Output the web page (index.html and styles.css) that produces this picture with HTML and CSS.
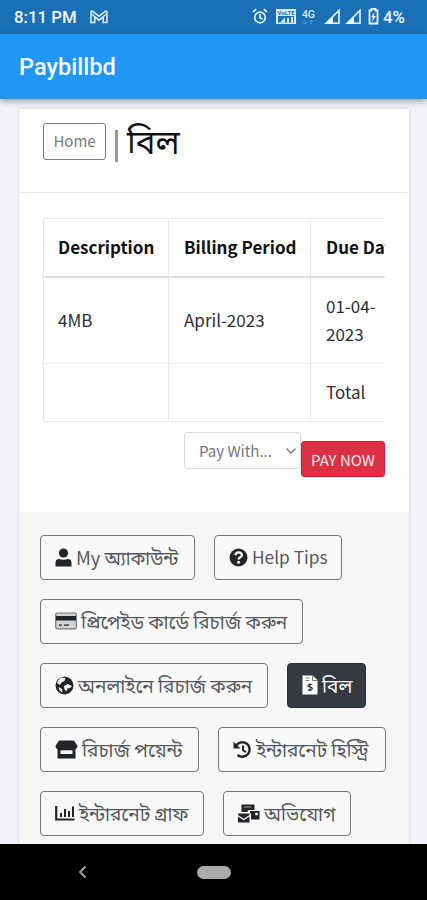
FILE: index.html
```html
<!DOCTYPE html>
<html lang="bn">
<head>
<meta charset="utf-8">
<title>Paybillbd</title>
<link rel="stylesheet" href="styles.css">
</head>
<body>
<div class="phone">
  <div class="status">
    <span class="clock">8:11 PM</span>
    <svg class="mail" width="18" height="14" viewBox="0 0 18 14"><path d="M1 12.5V2.5Q1 .8 2.6 1.2L9 6.4l6.4-5.2Q17 .8 17 2.5v10h-3.8V6.8L9 10.2 4.8 6.8v5.7zM4.8 6.8 1 3.5M13.2 6.8 17 3.5" fill="none" stroke="#e4eff8" stroke-width="1.5"/></svg>
    <svg class="tray" width="127" height="20" viewBox="0 0 127 20">
      <g fill="none" stroke="#eaf3fa" stroke-width="1.7"><circle cx="8" cy="10.5" r="5.3"/><path d="M8 7v3.8l2.5 1.5M1 5l3.2-2.8M15 5l-3.2-2.8"/></g>
      <path d="M24 2h20v15H24z" fill="#dceaf6"/><path d="M26 9h16v6.5H26z" fill="#1b70b5"/><path d="M28 15.500l5-5v5zM35 11h2v4.500h-2zM39 10h2v5.500h-2z" fill="#dceaf6"/>
      <text x="25.500" y="7.500" class="volte" textLength="17">VoLTE</text>
      <text x="50" y="10.500" class="net" textLength="13">4G</text>
      <path d="M53 13v4m-2-2 2 2 2-2M59 17v-4m-2 2 2-2 2 2" stroke="#5198d0" fill="none"/>
      <g fill="none" stroke="#e8f3fb" stroke-width="1.600"><path d="M74 16.200 87 3.500v12.700zM95 16.200 108 3.500v12.700z"/></g>
      <path d="M74 17l7-7v7zM95 17l7-7v7z" fill="#e8f3fb"/>
      <path d="M117.500 3.500h2V2h4v1.500h2v13h-8z" fill="none" stroke="#e8f3fb" stroke-width="1.800"/><path d="M122.500 5l-3.500 5.500h2L120 15l4-6h-2z" fill="#e8f3fb"/>
    </svg>
    <span class="percent">4%</span>
  </div>
  <header class="appbar">Paybillbd</header>
  <main class="content">
    <section class="card">
      <div class="card-head"><a class="home">Home</a><i class="bar"></i><h1>বিল</h1></div>
      <div class="card-body">
        <div class="table-clip">
          <table>
            <colgroup><col class="c1"><col class="c2"><col class="c3"></colgroup>
            <tr class="r-head"><th>Description</th><th>Billing Period</th><th>Due Date</th></tr>
            <tr class="r-item"><td>4MB</td><td>April-2023</td><td>01-04-<br>2023</td></tr>
            <tr class="r-total"><td></td><td></td><td>Total</td></tr>
          </table>
        </div>
        <div class="pay">
          <div class="select"><span>Pay With...</span><svg width="12" height="8" viewBox="0 0 12 8"><path d="M1.500 1.500 6 6l4.500-4.500" fill="none" stroke="#777b80" stroke-width="1.300"/></svg></div>
          <div class="paynow">PAY NOW</div>
        </div>
      </div>
      <nav class="links">
        <div class="row">
          <a class="btn w155"><svg width="17" height="19" viewBox="0 0 17 19"><circle cx="8.500" cy="5" r="4.600"/><path d="M.5 18.500v-3.500Q.5 11 4 11q4.500 1.500 9 0 3.500 0 3.500 4v3.500z"/></svg><span class="mixed">My অ্যাকাউন্ট</span></a>
          <a class="btn w128"><svg width="19" height="19" viewBox="0 0 19 19"><circle cx="9.500" cy="9.500" r="9"/><path d="M6.300 7.300q.5-3 3.400-3 3.200 0 3.200 2.700 0 1.500-1.700 2.300-1.500.7-1.500 2.200" fill="none" stroke="#f6f6f6" stroke-width="2.200"/><circle cx="9.600" cy="14.300" r="1.500" fill="#f6f6f6"/></svg><span class="latin">Help Tips</span></a>
        </div>
        <div class="row">
          <a class="btn w263"><svg width="22" height="18" viewBox="0 0 22 18"><rect x=".7" y="1" width="20.600" height="15.800" rx="1.500" fill="#d2d3d4" stroke="#777" stroke-width="1.200"/><path d="M1 4h20v4.500H1z"/><path d="M4 13.200h3M9 13.200h5" stroke="#555" stroke-width="1.700"/></svg><span>প্রিপেইড কার্ডে রিচার্জ করুন</span></a>
        </div>
        <div class="row">
          <a class="btn w228"><svg width="19" height="19" viewBox="0 0 19 19"><circle cx="9.500" cy="9.500" r="9"/><path d="M2 7q1-4 4.500-5.500l4 .5-1 3-3 1.500L5 9zM9 10l3.500-2 4.500 2-2 2-2.500.5-1 3-2-2zM3.500 11l3.500 2 .5 3.500Q4 15 3.500 11z" fill="#f1f1f1"/></svg><span>অনলাইনে রিচার্জ করুন</span></a>
          <a class="btn dark w79"><svg width="16" height="20" viewBox="0 0 16 20"><path d="M.5.500h10.200l4.800 4.800v14.200H.5z" fill="#fff"/><path d="M10.500.500v5h5M3.500 3h4M3.500 5.500h4" stroke="#777c80" fill="none"/><path d="M10.300 9.500H7.400q-1.900.3-1.200 1.900l3.500 1.200q1.500 1.800-.9 2.500H5.700M8 8.300v8" fill="none" stroke="#343a40" stroke-width="1.200"/></svg><span>বিল</span></a>
        </div>
        <div class="row">
          <a class="btn w159"><svg width="23" height="19" viewBox="0 0 23 19"><path d="M4 .5h15L22.500 6q0 3-3 3h-16Q.5 9 .5 6zM2.500 9h18v9.500h-18z"/><path d="M5.500 10.300h12v3.700h-12z" fill="#f6f6f6"/></svg><span>রিচার্জ পয়েন্ট</span></a>
          <a class="btn w168"><svg width="19" height="19" viewBox="0 0 19 19"><path d="M3.200 5.500A7.300 7.300 0 1 1 4.500 15" fill="none" stroke="#212529" stroke-width="2.400"/><path d="M.5 1.500v7h7z"/><path d="M10 5.500v4.500l3 2.200" fill="none" stroke="#212529" stroke-width="2"/></svg><span>ইন্টারনেট হিস্ট্রি</span></a>
        </div>
        <div class="row">
          <a class="btn w164"><svg width="20" height="18" viewBox="0 0 20 18"><path d="M1.200 2v13.500H19.500" fill="none" stroke="#212529" stroke-width="2.200"/><path d="M5 9h2v4H5zM9 5h2v8H9zM13 7h2v6h-2zM17 2.500h2V13h-2z"/></svg><span>ইন্টারনেট গ্রাফ</span></a>
          <a class="btn w128"><svg width="22" height="19" viewBox="0 0 22 19"><path d="M3.500.500h13V6H11q-1.500 0-1.500 2H3.500z"/><path d="M12 7h9.500v8.500H13V10l-1-1z"/><path d="M0 9.500h11.500V11l-5.700 3.700L0 11z"/><path d="M0 12.500l5.800 3.700 5.700-3.700v6H0z"/><path d="M17.500 9h2v2h-2zM6 3h7" fill="#f6f6f6" stroke="#f6f6f6" stroke-width=".6"/></svg><span>অভিযোগ</span></a>
        </div>
      </nav>
    </section>
  </main>
  <footer class="navbar"><svg width="10" height="14" viewBox="0 0 10 14"><path d="M7.500 1.500 2 7l5.500 5.500" fill="none" stroke="#a0a0a0" stroke-width="1.800"/></svg><i class="pill"></i></footer>
</div>
</body>
</html>
```
FILE: styles.css
```css
* { box-sizing: border-box; }
body { margin: 0; overflow: hidden; font-family: "Noto Sans CJK SC", "Noto Sans Bengali", sans-serif; color: #2b2f33; }
.phone { width: 427px; height: 900px; display: flex; flex-direction: column; overflow: hidden; }
.status { flex: none; height: 34px; background: #1b70b5; display: flex; align-items: center; padding-left: 14px; color: #f1f7fc; font: 500 16.800px/35px Roboto, sans-serif; }
.clock { width: 63px; white-space: nowrap; }
.mail { margin-left: 13px; }
.tray { margin-left: 144px; }
.percent { margin-left: 4px; }
.volte { font: 700 6px Roboto, sans-serif; fill: #1b70b5; }
.net { font: 500 10.500px Roboto, sans-serif; fill: #dceaf6; }
.appbar { flex: none; position: relative; height: 65px; padding-left: 19px; background: #2196f3; color: #f4faff; font: 500 23.600px/67px Roboto, sans-serif; box-shadow: 0 2px 7px rgba(0,0,0,.4); }
.content { flex: 1; min-height: 0; overflow: hidden; padding: 10px 18px 0 19px; background: #f2f4f9; }
.card { background: #fff; box-shadow: 0 0 3px rgba(0,0,0,.16); height: 740px; }
.card-head { height: 84px; border-bottom: 1px solid #e5e8ea; display: flex; align-items: flex-start; padding: 14px 24px 0; }
.home { width: 63px; height: 37px; border: 1px solid #777b7e; border-radius: 3px; text-align: center; font-size: 15px; line-height: 34px; color: #777b7e; }
.bar { width: 3px; height: 32px; margin: 7px 9px 0 9px; background: #999; }
h1 { margin: -2px 0 0; font-size: 33px; font-weight: 400; line-height: 38px; color: #111; }
.card-body { height: 319px; padding: 25px 24px 0; }
.table-clip { width: 342px; overflow: hidden; }
table { width: 400px; border-collapse: collapse; table-layout: fixed; font-size: 17px; line-height: 28px; }
.c1 { width: 125px; } .c2 { width: 142px; } .c3 { width: 133px; }
th, td { border: 1px solid #e5e8ea; padding: 0 15px 1px; text-align: left; white-space: nowrap; }
th:first-child, td:first-child { padding-left: 14px; }
th { border-bottom: 2px solid #dce0e4; color: #111; font-weight: 700; }
.r-head { height: 58px; } .r-item { height: 87px; } .r-total { height: 58px; }
.pay { display: flex; width: 342px; justify-content: flex-end; padding-top: 10px; }
.select { width: 117px; height: 37px; border: 1px solid #d9dcdf; border-radius: 3px; display: flex; align-items: center; justify-content: space-between; padding: 0 3px 0 14px; color: #74787c; font-size: 15px; line-height: 35px; white-space: nowrap; }
.paynow { width: 84px; height: 36px; margin-top: 9px; border-radius: 3px; border: 1px solid #d01f32; background: #dc3044; color: #fbe9ec; font-size: 15px; line-height: 35px; text-align: center; white-space: nowrap; }
.links { height: 337px; padding: 23px 0 0 21px; background: #f6f6f6; display: flex; flex-direction: column; gap: 19px; }
.row { display: flex; gap: 19px; }
.btn { flex: none; height: 45px; display: flex; align-items: center; gap: 4px; padding: 0 0 1px 14px; border: 1px solid #73777a; border-radius: 4px; background: #f9f9f9; color: #54585c; font-size: 19px; line-height: 40px; white-space: nowrap; }
.btn svg { flex: none; fill: #212529; }
.mixed { font-size: 18.300px; }
.latin { font-size: 17.300px; }
.dark { background: #343a40; border-color: #2c3136; color: #fff; }
.w79 { width: 79px; } .w128 { width: 128px; } .w155 { width: 155px; } .w159 { width: 159px; }
.w164 { width: 164px; } .w168 { width: 168px; } .w228 { width: 228px; } .w263 { width: 263px; }
.navbar { flex: none; height: 56px; background: #000; display: flex; align-items: center; padding-left: 78px; }
.pill { width: 34px; height: 13px; margin-left: 109px; border-radius: 7px; background: #aaa; }
```
